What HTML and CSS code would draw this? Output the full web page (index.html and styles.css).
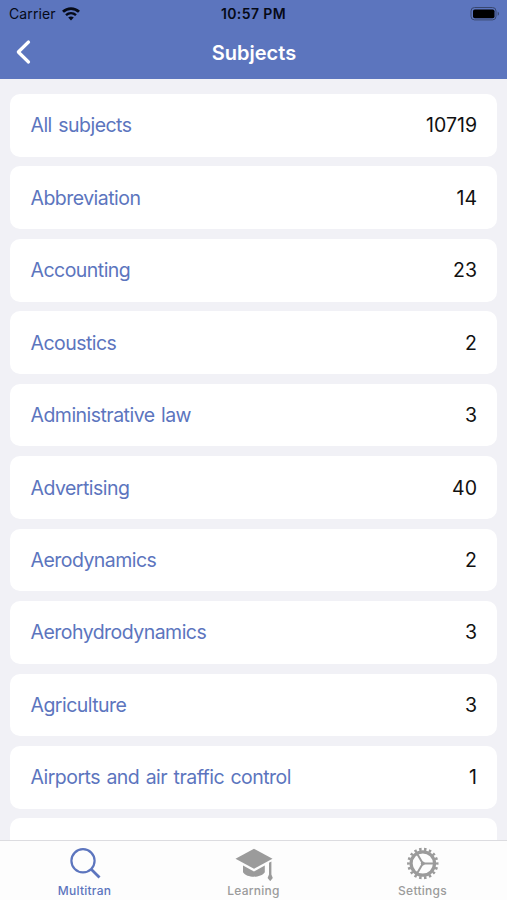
FILE: index.html
```html
<!DOCTYPE html>
<html lang="en">
  <head>
    <meta charset="UTF-8" />
    <meta name="viewport" content="width=device-width, initial-scale=1.0" />
    <title>Subjects</title>
    <link rel="stylesheet" href="styles.css">
  </head>
  <body>
    <header class="header">
      <div class="status-bar">
        <div class="carrier">
          <span>Carrier</span>
          <svg class="wifi" viewBox="0 0 18 14" width="18" height="14">
            <path d="M1 4.8C5.5.5 12.5.5 17 4.8" fill="none" stroke="#060a17" stroke-width="2.8" />
            <path d="M4 8.2c2.9-2.7 7.1-2.7 10 0" fill="none" stroke="#060a17" stroke-width="2.4" />
            <path d="M6.2 10.6c1.7-1.5 3.9-1.5 5.6 0L9 13.4z" fill="#060a17" />
          </svg>
        </div>
        <span class="time">10:57 PM</span>
        <svg class="battery" viewBox="0 0 30 14" width="30" height="14">
          <rect x="1" y=".5" width="25" height="12.4" rx="3.5" fill="none" stroke="#38476f" />
          <rect x="3" y="2.4" width="21.5" height="8.8" rx="1.8" fill="#000" />
          <path d="M27.7 4.5c1.8.8 1.8 3.5 0 4.300z" fill="#38476f" />
        </svg>
      </div>
      <div class="nav-bar">
        <a class="back" href="#" aria-label="Back">
          <svg viewBox="0 0 16 26" width="16" height="26">
            <path d="M13.5 3L3.3 13l10.200 10" fill="none" stroke="#fff" stroke-width="3.2" stroke-linecap="round" stroke-linejoin="round" />
          </svg>
        </a>
        <h1>Subjects</h1>
      </div>
    </header>

    <main class="list">
      <div class="row"><span class="name">All subjects</span><span class="count">10719</span></div>
      <div class="row"><span class="name">Abbreviation</span><span class="count">14</span></div>
      <div class="row"><span class="name">Accounting</span><span class="count">23</span></div>
      <div class="row"><span class="name">Acoustics</span><span class="count">2</span></div>
      <div class="row"><span class="name">Administrative law</span><span class="count">3</span></div>
      <div class="row"><span class="name">Advertising</span><span class="count">40</span></div>
      <div class="row"><span class="name">Aerodynamics</span><span class="count">2</span></div>
      <div class="row"><span class="name">Aerohydrodynamics</span><span class="count">3</span></div>
      <div class="row"><span class="name">Agriculture</span><span class="count">3</span></div>
      <div class="row"><span class="name">Airports and air traffic control</span><span class="count">1</span></div>
      <div class="row"></div>
    </main>

    <nav class="tabs">
      <a class="tab active" href="#">
        <svg viewBox="0 0 36 34" width="36" height="34">
          <circle cx="16" cy="13.8" r="11.6" fill="none" stroke="currentColor" stroke-width="2.2" />
          <path d="M24.2 22.3l8.3 8.2" stroke="currentColor" stroke-width="2.8" />
        </svg>
        <span>Multitran</span>
      </a>
      <a class="tab" href="#">
        <svg viewBox="0 0 38 34" width="38" height="34">
          <path d="M.5 11.800L19 1.800l18.500 10L19 21.800z" fill="currentColor" />
          <path d="M8 18.600l11 5.800 10.800-5.800v6.600c-3.800 6-18 6-21.800 0z" fill="currentColor" />
          <path d="M34 15.800l2.400-1.200v12.900l1.400 3.500-2.600 3.200-2.600-3.200 1.400-3.500z" fill="currentColor" />
        </svg>
        <span>Learning</span>
      </a>
      <a class="tab" href="#">
        <svg viewBox="0 0 34 34" width="34" height="34">
          <g fill="none" stroke="currentColor">
            <circle cx="16.8" cy="16.5" r="11.7" stroke-width="3.2" />
            <!-- 18 teeth -->
            <circle cx="16.8" cy="16.5" r="14.3" stroke-width="2.8" pathLength="180" stroke-dasharray="5 5" stroke-dashoffset="2.5" />
            <path d="M16.8 16.5h11M16.8 16.5L11.3 7M16.8 16.5L11.3 26" stroke-width="2" />
          </g>
          <circle cx="16.8" cy="16.5" r="2" fill="currentColor" />
        </svg>
        <span>Settings</span>
      </a>
    </nav>
  </body>
</html>
```

FILE: styles.css
```css
* {
  box-sizing: border-box;
}
body {
  margin: 0;
  height: 100vh;
  display: flex;
  flex-direction: column;
  overflow: hidden;
  font-family: Inter, "Liberation Sans", sans-serif;
  background: #f1f1f6;
}
.header {
  flex: none;
  height: 79px;
  background: #5c75be;
}
.status-bar {
  display: grid;
  grid-template-columns: 1fr auto 1fr;
  align-items: center;
  height: 27px;
  padding: 0 7px 0 9px;
  font-size: 14px;
  color: #060a17;
}
.carrier {
  display: flex;
  align-items: center;
  gap: 6px;
  letter-spacing: 0.1px;
}
.time {
  margin-right: 2px;
  font-weight: 600;
  letter-spacing: 0.4px;
}
.battery {
  justify-self: end;
}
.nav-bar {
  display: grid;
  grid-template-columns: 1fr auto 1fr;
  align-items: center;
  height: 50px;
  padding: 0 14px 0 15px;
}
.back {
  height: 26px;
}
h1 {
  margin: 0;
  padding-top: 1px;
  font-size: 20px;
  font-weight: 600;
  color: #fff;
}
.list {
  flex: 1;
  min-height: 0;
  overflow: hidden;
  display: flex;
  flex-direction: column;
  gap: 9.75px;
  padding: 15px 10px 0;
}
.row {
  flex: none;
  display: flex;
  justify-content: space-between;
  align-items: center;
  height: 62.7px;
  padding: 0 20px 0 20.5px;
  border-radius: 10px;
  background: #fff;
  font-size: 19.5px;
}
.name {
  color: #5c75be;
  letter-spacing: -0.53px;
  word-spacing: 1.5px;
}
.count {
  color: #111;
}
.tabs {
  flex: none;
  display: flex;
  height: 60px;
  border-top: 1px solid #dcdce0;
  background: #fdfdfd;
}
.tab {
  flex: 1;
  display: flex;
  flex-direction: column;
  align-items: center;
  padding-top: 6px;
  font-size: 12px;
  font-weight: 500;
  line-height: 19px;
  letter-spacing: 0.25px;
  color: #9b9b9b;
  text-decoration: none;
}
.tab.active {
  color: #5c75be;
}
```
